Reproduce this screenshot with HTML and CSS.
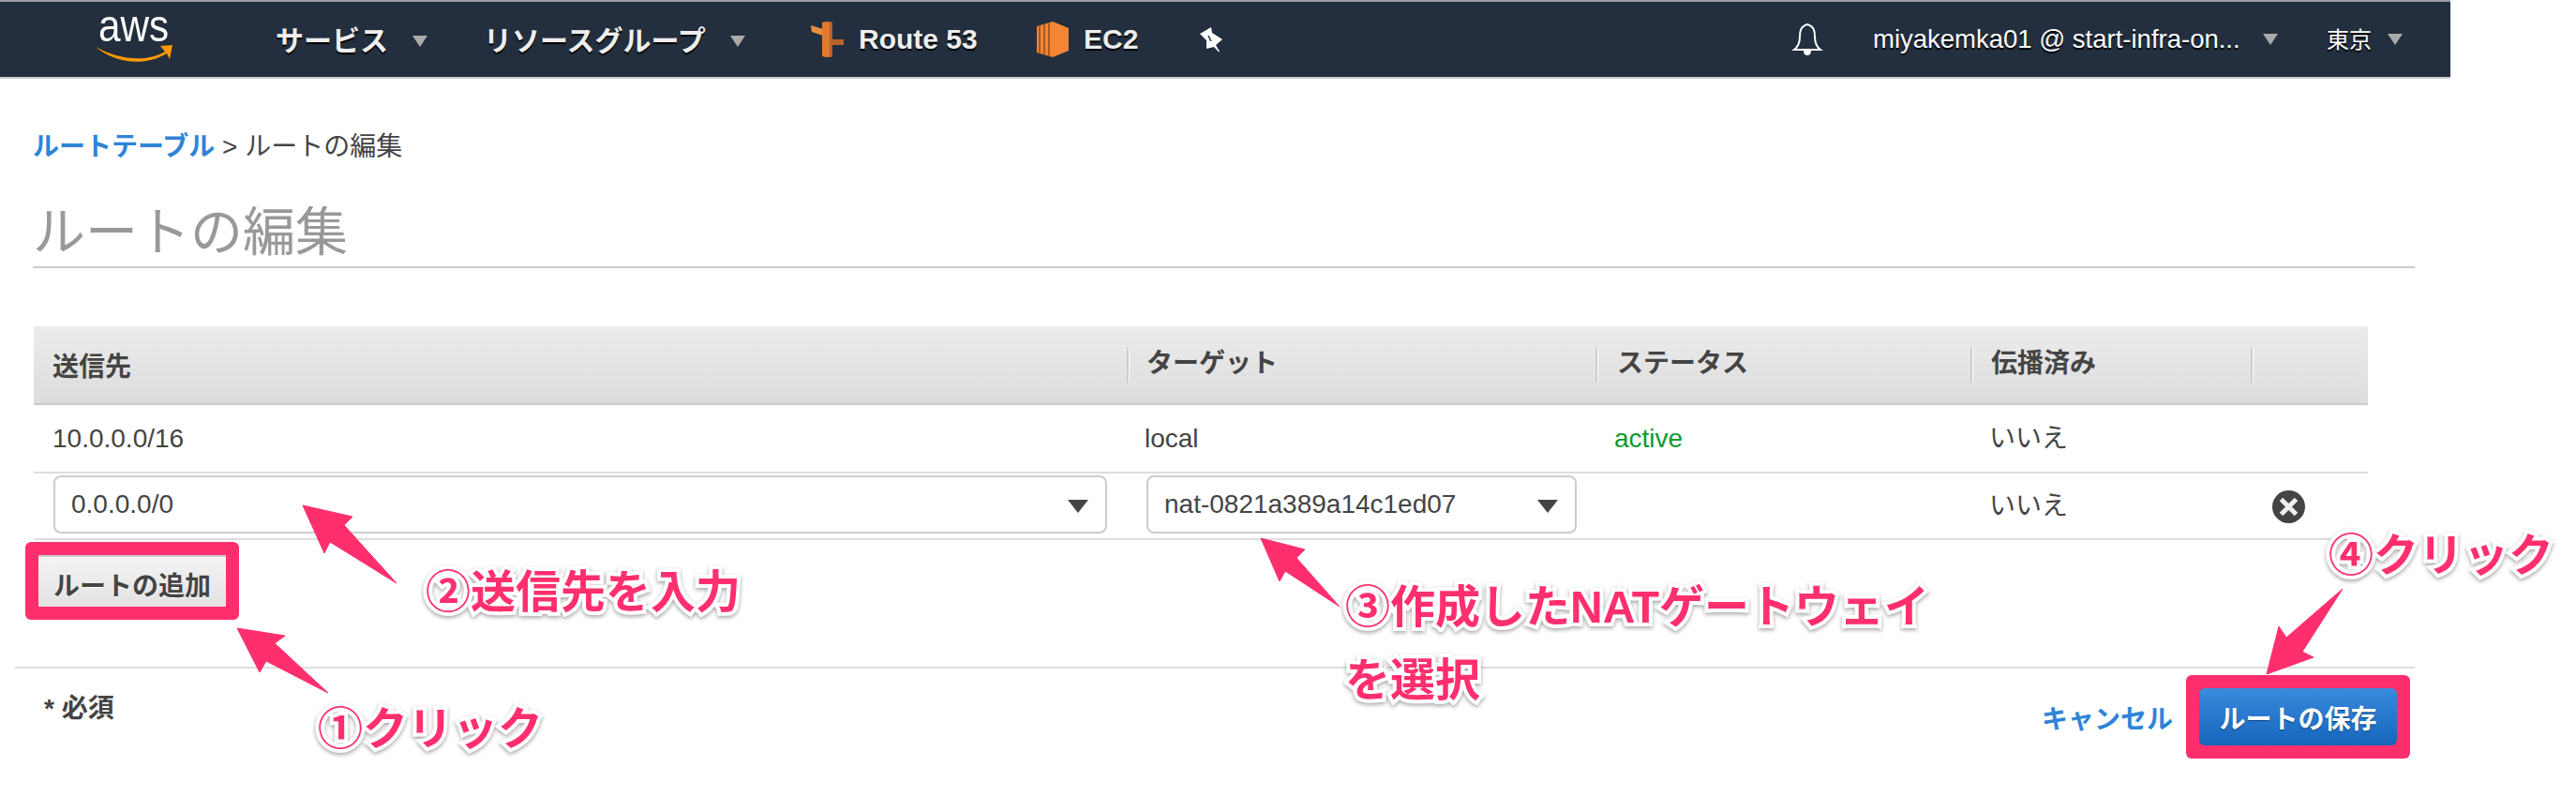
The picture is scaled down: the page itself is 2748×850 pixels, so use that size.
FILE: index.html
```html
<!DOCTYPE html>
<html lang="ja">
<head>
<meta charset="utf-8">
<title>ルートの編集</title>
<link rel="stylesheet" href="styles.css">
</head>
<body>
<div class="page">
  <header class="nav">
    <div class="logo">
      <span class="logo-text">aws</span>
      <svg class="smile" width="84" height="20" viewBox="0 0 84 20"><path d="M1 3C22 15 54 21 75 8L70 2 83 1 80 16 77 10C54 24 22 21 1 3Z" fill="#f90"/></svg>
    </div>
    <a class="nav-item nav-services">サービス<i class="caret"></i></a>
    <a class="nav-item nav-groups">リソースグループ<i class="caret"></i></a>
    <a class="nav-item nav-route">
      <svg class="svc-icon" width="36" height="40" viewBox="0 0 36 40"><path d="M1 5 14 9V16L2 12Z" fill="#f08c3a"/><path d="M24 20H36V26H24Z" fill="#b9622a"/><path d="M13 2Q18 0 24 2V38Q18 40 13 38Z" fill="#e07a30"/><path d="M21 1.5 24 2V38L21 39Z" fill="#b9622a"/></svg>
      Route 53
    </a>
    <a class="nav-item nav-ec2">
      <svg class="svc-icon" width="34" height="38" viewBox="0 0 34 38"><path d="M0 5 17 0 34 7V31L17 38 0 33Z" fill="#f58534"/><path d="M3 4.2V33.8M8 2.8V35.2M13 1.4V36.6" stroke="#a85a1e" stroke-width="2"/></svg>
      EC2
    </a>
    <svg class="pin" width="24" height="28" viewBox="0 0 24 28"><path d="M0 8 12 1 13 7 24 14 17 20 21 27 20 27.5 15 22 7 24 7 15Z" fill="#fff"/><path d="M9 10 12 16" stroke="#232f3e" stroke-width="1.5"/></svg>
    <div class="nav-right">
      <svg class="bell" width="34" height="36" viewBox="0 0 34 36"><path d="M17 2C10 4 9 9 9 15 9 22 7 26 3 29H31C27 26 25 22 25 15 25 9 24 4 17 2Z" fill="none" stroke="#fff" stroke-width="2"/><path d="M13 30C13 34 15 35 17 35S21 34 21 30Z" fill="#fff"/></svg>
      <a class="nav-user">miyakemka01 @ start-infra-on...<i class="caret caret-small"></i></a>
      <a class="nav-region"><span class="region-name">東京</span><i class="caret caret-small caret-region"></i></a>
    </div>
  </header>

  <nav class="breadcrumb"><a class="link crumb-link">ルートテーブル</a> &gt; ルートの編集</nav>
  <h1 class="title">ルートの編集</h1>

  <div class="table">
    <div class="row head">
      <div class="cell c1">送信先</div>
      <div class="cell sep c2">ターゲット</div>
      <div class="cell sep c3">ステータス</div>
      <div class="cell sep c4">伝播済み</div>
      <div class="cell sep"></div>
    </div>
    <div class="row first">
      <div class="cell c1">10.0.0.0/16</div>
      <div class="cell c2">local</div>
      <div class="cell c3b active">active</div>
      <div class="cell c4 raised">いいえ</div>
      <div class="cell"></div>
    </div>
    <div class="row second">
      <div class="cell c1"><div class="select wide">0.0.0.0/0<i class="sel-arrow"></i></div></div>
      <div class="cell c2"><div class="select narrow">nat-0821a389a14c1ed07<i class="sel-arrow"></i></div></div>
      <div class="cell"></div>
      <div class="cell c4 raised">いいえ</div>
      <div class="cell"><svg class="remove" width="35" height="35" viewBox="0 0 35 35"><circle cx="17.5" cy="17.5" r="17.5" fill="#444"/><path d="M9.5 9.5 25.5 25.5M25.5 9.5 9.5 25.5" stroke="#eee" stroke-width="5"/></svg></div>
    </div>
  </div>

  <div class="hl hl-add"><button class="btn-add">ルートの追加</button></div>

  <footer class="footer">
    <div class="required">* 必須</div>
    <div class="actions">
      <a class="link cancel">キャンセル</a>
      <div class="hl"><button class="btn-save">ルートの保存</button></div>
    </div>
  </footer>
</div>

<svg class="arrows" width="2748" height="850" viewBox="0 0 2748 850">
  <path d="M323 539 376 551 367 560 423 622 352 578 346 590Z"/>
  <path d="M253 670 304 678 293 686 350 739 284 705 277 717Z"/>
  <path d="M1345 574 1392 586 1383 595 1429 647 1371 609 1365 620Z"/>
  <path d="M2499 628 2439 680 2431 668 2418 719 2468 701 2456 695Z"/>
</svg>
<div class="note n1">①クリック</div>
<div class="note n2">②送信先を入力</div>
<div class="note n3">③作成したNATゲートウェイ</div>
<div class="note n3b">を選択</div>
<div class="note n4">④クリック</div>
</body>
</html>
```
FILE: styles.css
```css
* { box-sizing: border-box; }
html, body { margin: 0; height: 850px; overflow: hidden; background: #fff; }
body { font-family: "Liberation Sans", "Noto Sans CJK JP", sans-serif; font-size: 28px; color: #444; }
.page { width: 2614px; }

.nav { height: 84px; background: #232f3e; border-top: 2px solid #9a9ea3; border-bottom: 2px solid #ccc; display: flex; align-items: center; color: #eee; font-weight: bold; font-size: 30px; text-shadow: 0 2px 1px #000; }
.logo { width: 294px; flex: none; padding-left: 101px; height: 100%; position: relative; }
.logo-text { display: block; font-weight: 400; font-size: 48px; line-height: 40px; margin-top: 6px; margin-left: 4px; transform: scaleX(.88); transform-origin: left center; color: #fff; text-shadow: none; }
.smile { display: block; margin-top: -1px; }
.nav-item { display: flex; align-items: center; flex: none; }
.nav-services, .nav-groups { padding-bottom: 2px; }
.caret { display: inline-block; width: 0; height: 0; border-left: 8px solid transparent; border-right: 8px solid transparent; border-top: 12px solid #aaa; margin-left: 26px; margin-top: 5px; }
.caret-small { border-left-width: 8px; border-right-width: 8px; border-top-width: 12px; margin-left: 24px; margin-top: 0; }
.caret-region { margin-left: 17px; }
.nav-services { width: 222px; }
.nav-groups { width: 348px; }
.nav-route { width: 242px; }
.nav-ec2 { width: 174px; }
.svc-icon { margin-right: 16px; flex: none; }
.pin { flex: none; }
.nav-right { margin-left: auto; display: flex; align-items: center; font-weight: normal; font-size: 27.5px; color: #fff; }
.bell { margin-right: 53px; }
.nav-user { display: flex; align-items: center; width: 484px; }
.nav-region { display: flex; align-items: center; width: 132px; font-size: 24px; }
.region-name { margin-bottom: 4px; }

.breadcrumb { margin: 53px 0 0 35px; height: 40px; line-height: 40px; }
.link { color: #2d84d8; }
.crumb-link { font-weight: bold; }
.title { margin: 38px 0 0 35px; width: 2541px; height: 71px; line-height: 66px; font-size: 56px; font-weight: normal; color: #999; border-bottom: 2px solid #ccc; }

.table { margin: 62px 0 0 36px; width: 2490px; }
.row { display: grid; grid-template-columns: 1166px 500px 400px 299px 125px; align-items: center; }
.head { height: 84px; background: linear-gradient(#ececec, #dcdcdc); border-bottom: 2px solid #ccc; font-weight: bold; }
.first { height: 73px; border-bottom: 2px solid #ddd; }
.second { height: 71px; border-bottom: 2px solid #ddd; }
.cell { min-width: 0; }
.sep { height: 38px; line-height: 36px; border-left: 2px solid #ccc; box-shadow: inset 1px 0 0 #fff; }
.c1 { padding-left: 20px; }
.c2 { padding-left: 19px; }
.c3 { padding-left: 21px; }
.c3b { padding-left: 20px; }
.c4 { padding-left: 20px; }
.raised { margin-top: -5px; }
.active { color: #0c9a30; }
.select { height: 62px; border: 2px solid #ccc; border-radius: 8px; display: flex; align-items: center; justify-content: space-between; padding: 0 18px 0 17px; background: #fff; margin-top: -3px; }
.wide { width: 1124px; margin-left: 1px; }
.narrow { width: 459px; margin-left: 2px; }
.sel-arrow { width: 0; height: 0; border-left: 11px solid transparent; border-right: 11px solid transparent; border-top: 14px solid #444; margin-top: 4px; }
.remove { display: block; margin-left: 23px; margin-top: 2px; }

.hl { background: #ff2f6e; border-radius: 6px; padding: 14px; flex: none; }
.hl-add { margin: 2px 0 0 27px; width: 228px; height: 83px; }
.btn-add, .btn-save { display: block; padding: 0; border: 0; font: bold 28px "Liberation Sans", "Noto Sans CJK JP", sans-serif; white-space: nowrap; }
.btn-add { width: 200px; height: 55px; padding-top: 5px; background: linear-gradient(#f4f4f4, #e2e2e2); color: #444; border-top: 2px solid #ccc; text-shadow: 0 1px 0 #fff; }
.btn-save { width: 211px; height: 61px; background: linear-gradient(#3a8ade, #1565bb); color: #fff; border-radius: 6px; text-shadow: 0 1px 1px #0b3f7a; }

.footer { margin: 50px 0 0 16px; width: 2560px; border-top: 2px solid #ddd; padding: 7px 5px 0 31px; display: flex; justify-content: space-between; align-items: flex-start; }
.required { font-weight: bold; margin-top: 16px; line-height: 40px; }
.actions { display: flex; align-items: center; gap: 14px; }
.cancel { font-weight: bold; }

.arrows { position: absolute; left: 0; top: 0; pointer-events: none; }
.arrows path { fill: #ff2f6e; stroke: #ff2f6e; stroke-width: 1; stroke-linejoin: round; }
.note { position: absolute; white-space: nowrap; font-weight: bold; font-size: 48px; line-height: 56px; color: #ff2f6e; -webkit-text-stroke: 8px #fff; paint-order: stroke fill; filter: drop-shadow(0 2px 2px rgba(0,0,0,.35)); }
.n1 { left: 339px; top: 750px; }
.n2 { left: 454px; top: 604px; }
.n3 { left: 1435px; top: 620px; }
.n3b { left: 1435px; top: 698px; }
.n4 { left: 2484px; top: 565px; }
```
